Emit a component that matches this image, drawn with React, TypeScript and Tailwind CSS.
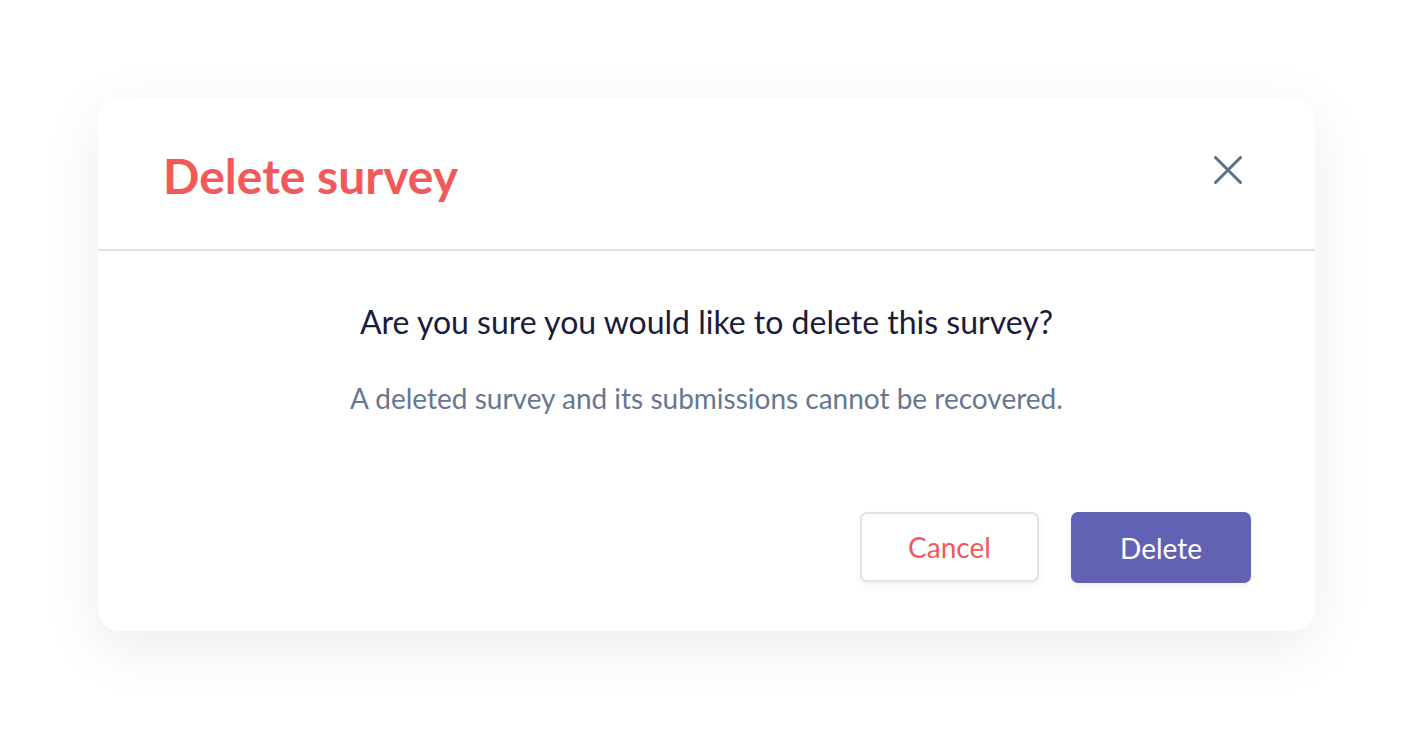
import React from "react";

export default function App() {
  return (
    <div
      className="w-[1418px] h-[734px] bg-white flex items-start justify-start pt-[98px] pl-[98px]"
      style={{ fontFamily: "Lato, 'Noto Sans', sans-serif" }}
    >
      <div className="w-[1217px] h-[533px] bg-white rounded-[22px] shadow-[0_16px_60px_rgba(0,0,0,0.08)] flex flex-col">
        <div className="h-[153px] shrink-0 flex items-center justify-between pl-[65px] pr-[73px] border-b-2 border-[#dfe2e6]">
          <h1 className="text-[48px] font-bold text-[#f05a5b] leading-none mt-[5px]">Delete survey</h1>
          <svg width="28" height="28" viewBox="0 0 28 28" className="text-[#5b6f87] mb-[8px]">
            <path d="M1.5 1.5 L26.5 26.5 M26.5 1.5 L1.5 26.5" stroke="currentColor" strokeWidth="3" strokeLinecap="round" />
          </svg>
        </div>
        <div className="flex-1 flex flex-col items-center pt-[55px]">
          <p className="text-[32px] text-[#1b1b3a] leading-none">Are you sure you would like to delete this survey?</p>
          <p className="mt-[46px] text-[28px] text-[#66778f] leading-none">
            A deleted survey and its submissions cannot be recovered.
          </p>
        </div>
        <div className="flex justify-end gap-[32px] pr-[64px] pb-[48px]">
          <button className="w-[179px] h-[70px] bg-white border-2 border-[#e1e3e6] rounded-[7px] shadow-[0_3px_6px_rgba(0,0,0,0.06)] text-[28px] text-[#f05a5b]">
            Cancel
          </button>
          <button className="w-[180px] h-[71px] bg-[#6262b5] rounded-[7px] shadow-[0_3px_6px_rgba(0,0,0,0.06)] text-[28px] text-white">
            Delete
          </button>
        </div>
      </div>
    </div>
  );
}
